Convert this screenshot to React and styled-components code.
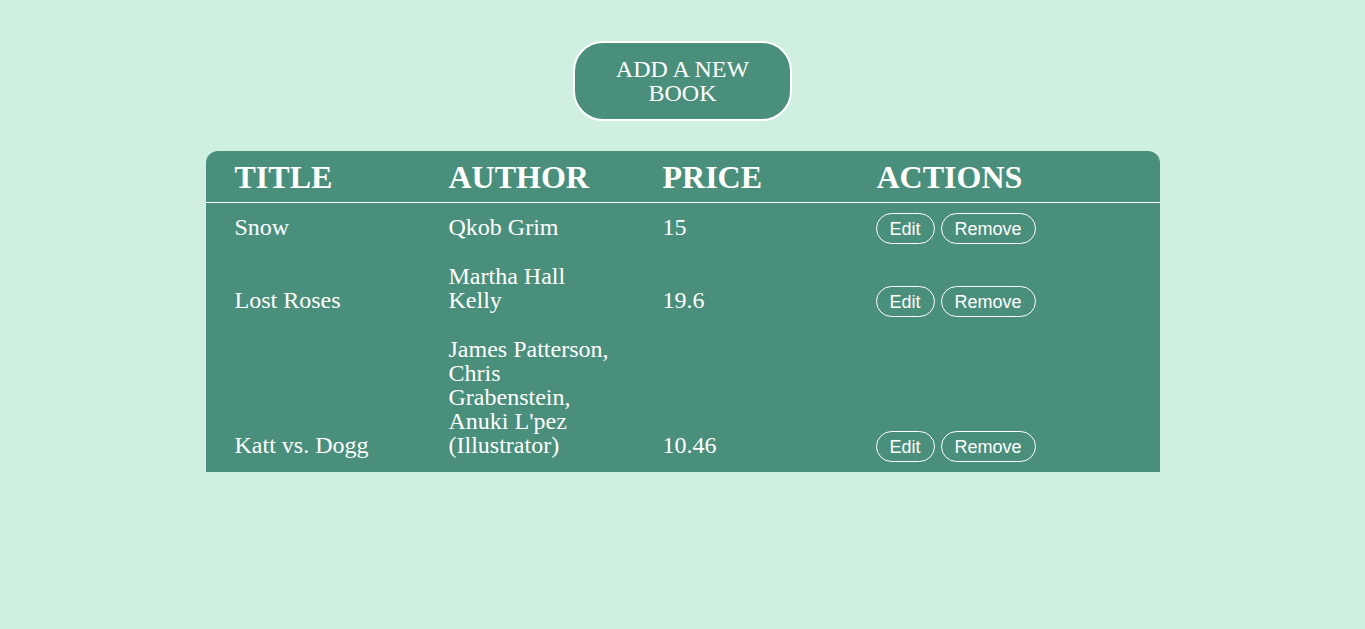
import React from 'react';
import styled, { createGlobalStyle } from 'styled-components';

const books = [
  { title: 'Snow', author: 'Qkob Grim', price: '15' },
  { title: 'Lost Roses', author: 'Martha Hall Kelly', price: '19.6' },
  {
    title: 'Katt vs. Dogg',
    author: "James Patterson, Chris Grabenstein, Anuki L'pez (Illustrator)",
    price: '10.46',
  },
];

const GlobalStyle = createGlobalStyle`
  html, body {
    margin: 0;
    padding: 0;
    background-color: #cff0e1;
    font-family: "Liberation Serif", "Times New Roman", serif;
  }
`;

const Page = styled.main`
  display: flex;
  flex-direction: column;
  align-items: center;
  padding-top: 41px;
  min-height: 629px;
  box-sizing: border-box;
`;

const AddButton = styled.button`
  box-sizing: border-box;
  width: 219px;
  height: 80px;
  padding: 14px 20px;
  margin-bottom: 30px;
  background-color: #4a8f7c;
  border: 2px solid #fff;
  border-radius: 30px;
  color: #fff;
  font-family: "Liberation Serif", "Times New Roman", serif;
  font-size: 24px;
  line-height: 24px;
  text-align: center;
  cursor: pointer;
`;

const Table = styled.div`
  width: 954px;
  background-color: #4a8f7c;
  border-radius: 12px 12px 0 0;
  color: #fff;
`;

const Row = styled.div`
  display: grid;
  grid-template-columns: 214px 214px 214px 1fr;
  align-items: end;
  padding-left: 29px;
  border-bottom: ${(p) => (p.$head ? '1px solid #fff' : 'none')};
`;

const HeadCell = styled.div`
  padding: 10px 0 9px;
  font-size: 32px;
  line-height: 32px;
  font-weight: bold;
`;

const Cell = styled.div`
  padding: 10px 46px 15px 0;
  font-size: 24px;
  line-height: 24px;
`;

const Actions = styled.div`
  display: flex;
  gap: 6px;
  padding: 10px 0 10px;
  margin-left: -1px;
`;

const SmallButton = styled.button`
  box-sizing: border-box;
  height: 31px;
  padding: 1px 13px 0;
  background: transparent;
  border: 1px solid #fff;
  border-radius: 16px;
  color: #fff;
  font-family: "Liberation Sans", Arial, sans-serif;
  font-size: 18px;
  cursor: pointer;
`;

export default function App() {
  return (
    <>
      <GlobalStyle />
      <Page>
        <AddButton>ADD A NEW BOOK</AddButton>
        <Table>
          <Row $head>
            <HeadCell>TITLE</HeadCell>
            <HeadCell>AUTHOR</HeadCell>
            <HeadCell>PRICE</HeadCell>
            <HeadCell>ACTIONS</HeadCell>
          </Row>
          {books.map((b) => (
            <Row key={b.title}>
              <Cell>{b.title}</Cell>
              <Cell>{b.author}</Cell>
              <Cell>{b.price}</Cell>
              <Actions>
                <SmallButton>Edit</SmallButton>
                <SmallButton>Remove</SmallButton>
              </Actions>
            </Row>
          ))}
        </Table>
      </Page>
    </>
  );
}
